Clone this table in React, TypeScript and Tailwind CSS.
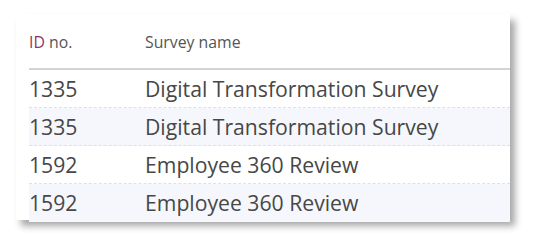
import React from 'react';

type Survey = { id: number; name: string };

const surveys: Survey[] = [
  { id: 1335, name: 'Digital Transformation Survey' },
  { id: 1335, name: 'Digital Transformation Survey' },
  { id: 1592, name: 'Employee 360 Review' },
  { id: 1592, name: 'Employee 360 Review' },
];

const App = () => {
  return (
    <div className="w-[536px] h-[242px] bg-white pt-[14px] pl-[16px]" style={{ fontFamily: '"Open Sans", sans-serif' }}>
      <div className="w-[494px] h-[206px] bg-white pl-[13px] shadow-[5px_6px_7px_rgba(0,0,0,0.35)]">
        <div className="flex items-end h-[56px] pb-[13px] border-b-2 border-[#d4d4d4] text-[15.8px] text-[#555]">
          <div className="w-[116px]">
            <span className="text-[#8e3566]">ID</span> no.
          </div>
          <div>Survey name</div>
        </div>
        {surveys.map((s, i) => (
          <div
            key={i}
            className={`flex items-center h-[38px] text-[21.2px] text-[#474747] ${i < surveys.length - 1 ? 'border-b border-dashed border-[#e0e0e0]' : ''} ${i % 2 === 1 ? 'bg-[#f6f7fc]' : 'bg-white'}`}
          >
            <div className="w-[116px]">{s.id}</div>
            <div>{s.name}</div>
          </div>
        ))}
      </div>
    </div>
  );
};

export default App;
